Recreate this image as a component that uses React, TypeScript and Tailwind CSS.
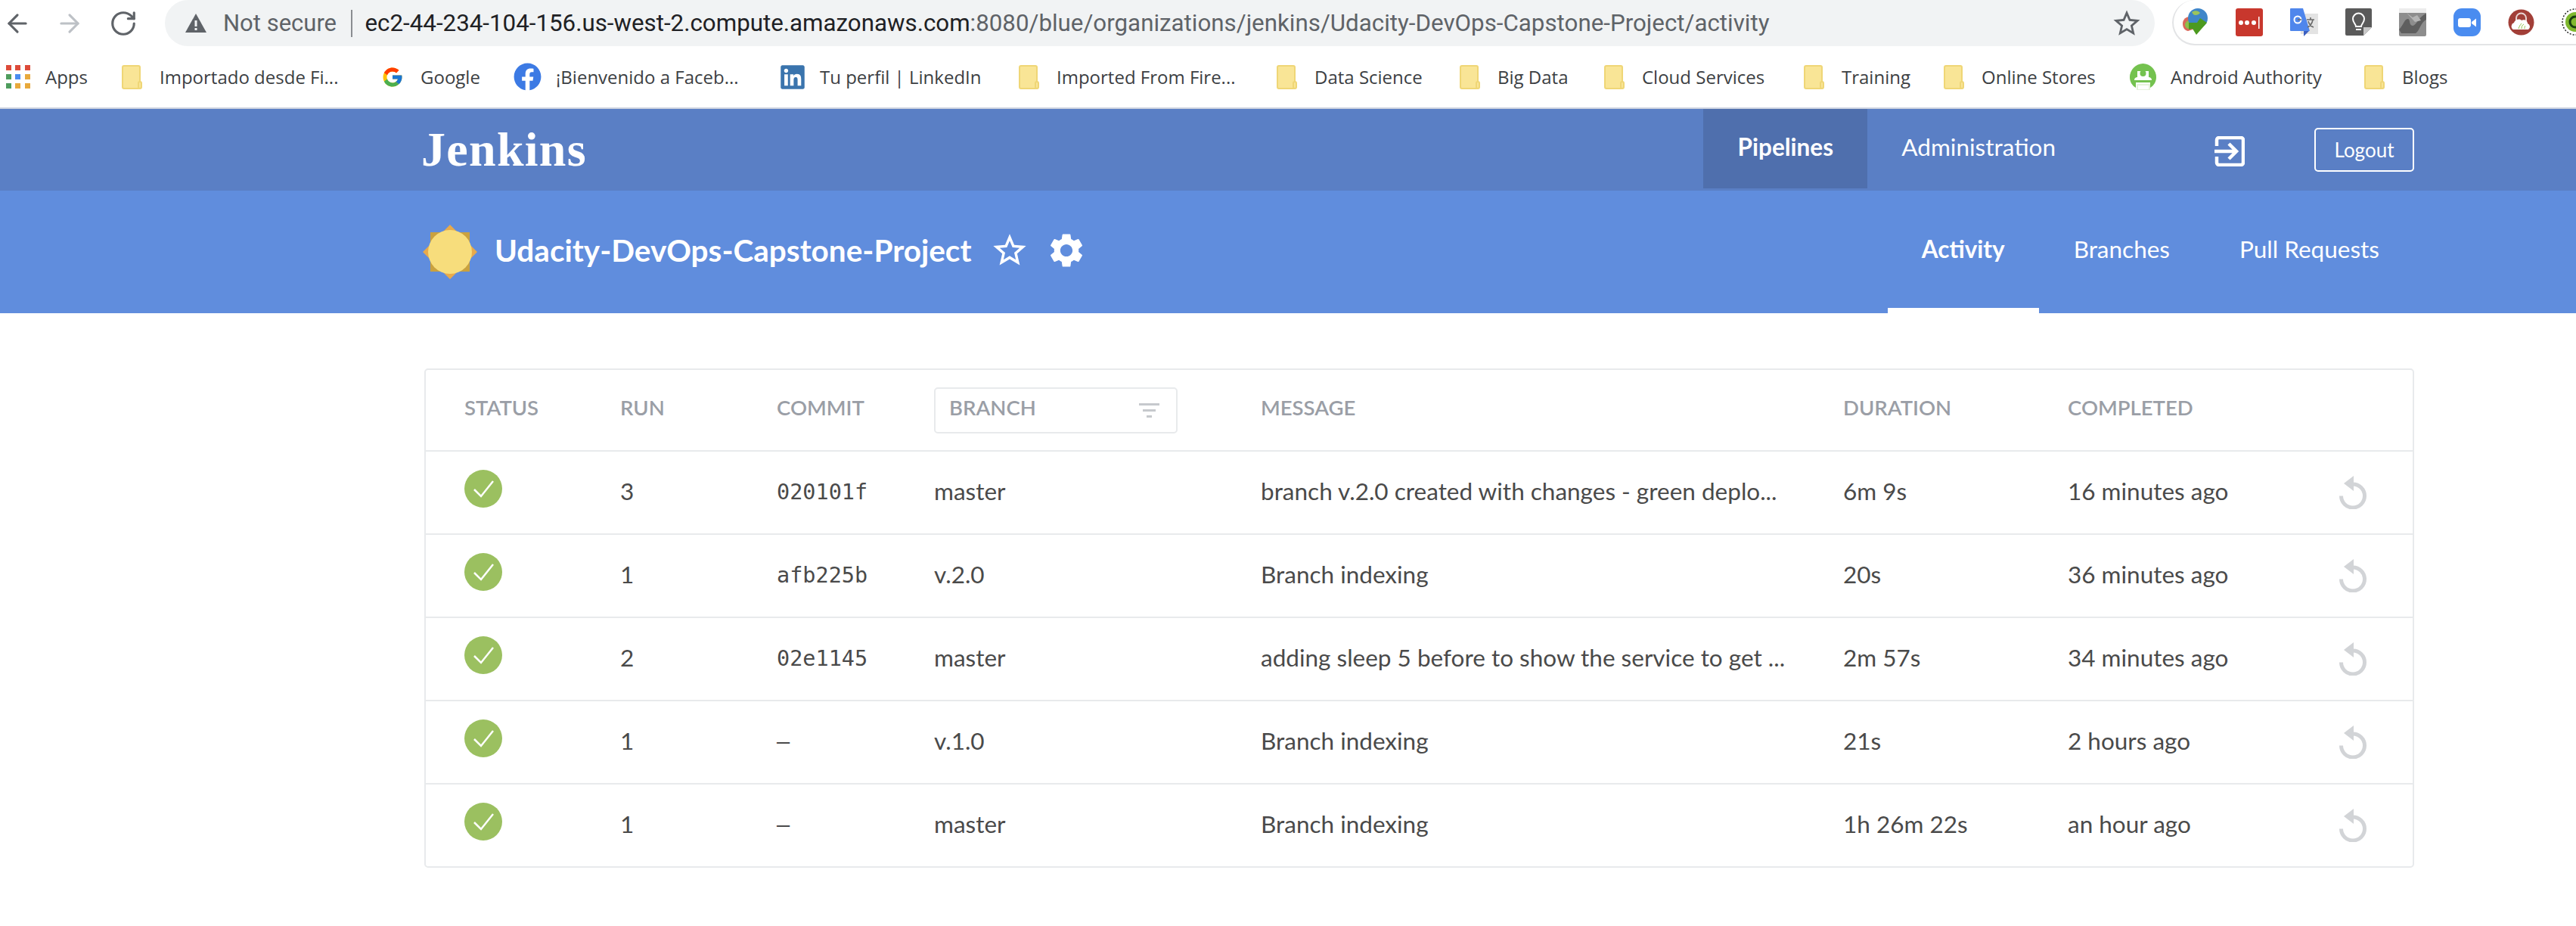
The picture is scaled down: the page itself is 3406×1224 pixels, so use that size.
import React from "react";
import { ArrowLeft, ArrowRight, RotateCw } from "lucide-react";
import { FcGoogle } from "react-icons/fc";
import { FaFacebook, FaLinkedin } from "react-icons/fa";
import { MdSettings, MdStarBorder } from "react-icons/md";

function Folder() {
  return (
    <svg width="27" height="32" viewBox="0 0 27 32" className="shrink-0">
      <rect x="1" y="1" width="23" height="30" rx="2" fill="#f9e596" stroke="#efd676" strokeWidth="2" />
      <rect x="22" y="22" width="4" height="9" rx="2" fill="#f9e596" stroke="#efd676" strokeWidth="2" />
    </svg>
  );
}

function AppsGrid() {
  const c = ["#dd4b39", "#dd4b39", "#dd4b39", "#4f9d5d", "#4a8cf0", "#e8a93c", "#4f9d5d", "#e8a93c", "#e8a93c"];
  return (
    <div className="grid grid-cols-3 gap-[5px] w-[32px] shrink-0">
      {c.map((x, i) => (
        <svg key={i} width="7" height="7" className="block">
          <rect width="7" height="7" fill={x} />
        </svg>
      ))}
    </div>
  );
}

function AndroidIcon() {
  return (
    <svg width="37" height="36" viewBox="0 0 37 36" className="shrink-0">
      <path d="M18.5 0A18 18 0 0 0 1 18c0 6 3 11 8 14V25h19v7c5-3 8-8 8-14A18 18 0 0 0 18.5 0Z" fill="#74c24f" />
      <path d="M7 22c0-3 2-4 4-4V10h15v8c2 0 4 1 4 4Z" fill="#fff" />
      <circle cx="18.5" cy="13" r="4" fill="#74c24f" />
      <path d="M10 27h18v8H10Z" fill="#e6f3dc" />
      <path d="M12 29h14v5H12Z" fill="#fff" />
    </svg>
  );
}

const bookmarks: { icon: React.ReactNode; label: string; cls: string; item: string }[] = [
  { icon: <Folder />, label: "Importado desde Fi...", cls: "w-[252px]", item: "gap-[23px]" },
  { icon: <FcGoogle size={30} className="shrink-0" />, label: "Google", cls: "w-[86px]", item: "gap-[22px]" },
  { icon: <FaFacebook size={37} color="#3c7ae4" className="shrink-0" />, label: "¡Bienvenido a Faceb...", cls: "w-[254px]", item: "gap-[19px] -ml-[4px]" },
  { icon: <FaLinkedin size={36} color="#3a74ad" className="shrink-0" />, label: "Tu perfil | LinkedIn", cls: "w-[222px]", item: "gap-[18px]" },
  { icon: <Folder />, label: "Imported From Fire...", cls: "w-[250px]", item: "gap-[23px]" },
  { icon: <Folder />, label: "Data Science", cls: "w-[151px]", item: "gap-[23px]" },
  { icon: <Folder />, label: "Big Data", cls: "w-[100px]", item: "gap-[23px]" },
  { icon: <Folder />, label: "Cloud Services", cls: "w-[173px]", item: "gap-[23px]" },
  { icon: <Folder />, label: "Training", cls: "w-[94px]", item: "gap-[23px]" },
  { icon: <Folder />, label: "Online Stores", cls: "w-[158px]", item: "gap-[23px]" },
  { icon: <AndroidIcon />, label: "Android Authority", cls: "w-[215px]", item: "gap-[18px] -ml-[4px]" },
  { icon: <Folder />, label: "Blogs", cls: "w-[64px]", item: "gap-[23px]" },
];

function ExtensionIcons() {
  return (
    <div className="flex items-center gap-[36px] pl-[10px]">
      <svg width="36" height="36" viewBox="0 0 36 36" className="shrink-0">
        <path d="M2 20c0-6 6-10 12-9l4 16-9 3C4 29 2 25 2 20Z" fill="#d9695a" />
        <path d="M5 21c1-4 5-6 9-5l2 9-7 2c-3-1-4-3-4-6Z" fill="#8fbf4a" />
        <circle cx="22" cy="13" r="13" fill="#3f86c9" />
        <path d="M14 5c4-3 9-2 11 1-2 3-7 4-9 2Z" fill="#9cc45c" />
        <path d="M10 19h11l4-6 9 6-14 16-5-8-5 1Z" fill="#4c9a1f" />
      </svg>
      <svg width="36" height="37" viewBox="0 0 36 37" className="shrink-0">
        <rect width="36" height="37" rx="3" fill="#c8372d" />
        <circle cx="7" cy="19" r="3" fill="#fff" />
        <circle cx="15" cy="19" r="3" fill="#fff" />
        <circle cx="24" cy="19" r="3" fill="#fff" />
        <rect x="30" y="11" width="1.5" height="16" fill="#fff" />
      </svg>
      <svg width="37" height="37" viewBox="0 0 37 37" className="shrink-0">
        <rect x="14" y="7" width="23" height="27" fill="#e3e3e3" />
        <path d="M0 1a1 1 0 0 1 1-1h16l9 30H1a1 1 0 0 1-1-1Z" fill="#4f86ec" />
        <path d="M18 30h7l-7 7Z" fill="#3b5fc0" />
        <circle cx="10" cy="15" r="4.5" fill="none" stroke="#fff" strokeWidth="2" />
        <path d="M10 15h5M22 15h10M27 12v3M30 15c-1 6-5 9-7 10M24 17c1 4 4 7 7 8" fill="none" stroke="#6b6b6b" strokeWidth="1.6" />
      </svg>
      <svg width="35" height="36" viewBox="0 0 35 36" className="shrink-0">
        <path d="M2 0h31a2 2 0 0 1 2 2v23L24 36H2a2 2 0 0 1-2-2V2a2 2 0 0 1 2-2Z" fill="#5a5a5a" />
        <path d="M24 36V25h11Z" fill="#c8c8c8" />
        <path d="M14 24c0-3-4-5-4-10a7.500 7.500 0 0 1 15 0c0 5-4 7-4 10Z" fill="none" stroke="#fff" strokeWidth="2" />
        <path d="M14 28h7" stroke="#fff" strokeWidth="2" />
      </svg>
      <svg width="36" height="37" viewBox="0 0 36 37" className="shrink-0">
        <rect width="36" height="37" rx="2" fill="#8d8d8d" />
        <rect width="36" height="6" fill="#ececec" />
        <path d="M0 28c6-6 7-14 12-14 3 0 1 9 6 9s8-12 18-16v8c-8 4-8 14-14 18H3Z" fill="#5f5f5f" />
        <path d="M10 6l8 6 6-3 5 7-8 2Z" fill="#b4b4b4" />
      </svg>
      <svg width="36" height="37" viewBox="0 0 36 37" className="shrink-0">
        <rect width="36" height="37" rx="11" fill="#4a8cf0" />
        <rect x="6" y="13" width="17" height="12" rx="3" fill="#fff" />
        <path d="M24 18l6-4.500v11L24 20Z" fill="#fff" />
      </svg>
      <svg width="35" height="35" viewBox="0 0 35 35" className="shrink-0">
        <circle cx="17.500" cy="17.500" r="17" fill="#a23f38" />
        <path d="M11 15v-3a6.500 6.500 0 0 1 13 0v4" fill="none" stroke="#e9d6d4" strokeWidth="2" />
        <path d="M7 27a5 5 0 0 1 1-9c1-4 7-6 10-3 3-2 8 0 8 4a4.500 4.500 0 0 1 1 8Z" fill="#fff" />
        <path d="M14 26c1-3 2-5 4-7M18 26c0-3 1-5 3-6M22 26c0-2 0-3 1-4" stroke="#8fbf4a" strokeWidth="1" fill="none" />
      </svg>
      <svg width="36" height="36" viewBox="0 0 36 36" className="shrink-0">
        <circle cx="18" cy="18" r="17" fill="#fff" stroke="#222" strokeWidth="1.500" strokeDasharray="2 2" />
        <circle cx="18" cy="18" r="13" fill="#7fb82e" />
        <circle cx="18" cy="18" r="7" fill="none" stroke="#173d10" strokeWidth="3" />
      </svg>
    </div>
  );
}

function BrowserChrome() {
  return (
    <div className="bg-white font-['Open_Sans',sans-serif]">
      <div className="flex h-[61px]">
        <div className="w-[218px] shrink-0 flex items-center">
          <ArrowLeft size={38} strokeWidth={2} color="#5f6368" className="ml-[4px]" />
          <ArrowRight size={38} strokeWidth={2} color="#bdc1c6" className="ml-[31px]" />
          <RotateCw size={38} strokeWidth={2} color="#5f6368" className="ml-[33px]" />
        </div>
        <div className="w-[2631px] shrink-0 h-[61px] rounded-full bg-[#f1f3f4] flex items-center pl-[27px] pr-[16px]">
          <svg width="28" height="25" viewBox="0 0 28 25" className="shrink-0">
            <path d="M14 0 28 25H0Z" fill="#5f6368" />
            <rect x="12.500" y="9" width="3" height="8" fill="#f1f3f4" />
            <rect x="12.500" y="19" width="3" height="3" fill="#f1f3f4" />
          </svg>
          <span className="ml-[22px] w-[149px] text-[31px] text-[#5f6368] whitespace-nowrap leading-none font-['Roboto',sans-serif]">Not secure</span>
          <span className="ml-[20px] w-[1.500px] h-[36px] bg-[#8a8d91] shrink-0" />
          <span className="ml-[17px] text-[31.3px] whitespace-nowrap leading-none font-['Roboto',sans-serif] text-[#202124]">
            ec2-44-234-104-156.us-west-2.compute.amazonaws.com<span className="text-[#5f6368]">:8080/blue/organizations/jenkins/Udacity-DevOps-Capstone-Project/activity</span>
          </span>
          <MdStarBorder size={42} color="#5f6368" className="ml-auto shrink-0" />
        </div>
        <div className="ml-[23px] flex-1 h-[60px] rounded-l-[30px] border-2 border-r-0 border-t-0 border-[#e3e4e6] bg-white flex items-center overflow-hidden">
          <ExtensionIcons />
        </div>
      </div>
      <div className="h-[81px] flex items-center pl-[8px] gap-[41px] text-[24px] text-[#3c4043] whitespace-nowrap">
        <div className="flex items-center gap-[20px]">
          <AppsGrid />
          <span className="w-[60px]">Apps</span>
        </div>
        {bookmarks.map((b) => (
          <div key={b.label} className={`flex items-center ${b.item}`}>
            {b.icon}
            <span className={b.cls}>{b.label}</span>
          </div>
        ))}
      </div>
      <div className="h-[2px] bg-[#ccd2e0]" />
    </div>
  );
}

function ExitIcon() {
  return (
    <svg width="40" height="40" viewBox="0 0 40 40">
      <path d="M3 13V5a3 3 0 0 1 3-3h29a3 3 0 0 1 3 3v30a3 3 0 0 1-3 3H6a3 3 0 0 1-3-3v-8" fill="none" stroke="#fff" strokeWidth="4.500" />
      <path d="M0 20h27M19 10l10 10-10 10" fill="none" stroke="#fff" strokeWidth="4.500" />
    </svg>
  );
}

function SunIcon() {
  return (
    <svg width="72" height="72" viewBox="0 0 72 72" className="shrink-0">
      <rect x="10" y="10" width="52" height="52" fill="#c9a13f" />
      <path d="M36 0 50 14H22ZM36 72 50 58H22ZM0 36 14 22V50ZM72 36 58 22V50Z" fill="#e8aa4b" />
      <circle cx="36" cy="36" r="29" fill="#f7dd7c" />
    </svg>
  );
}

function Header() {
  return (
    <div className="font-['Lato',sans-serif] text-white">
      <div className="h-[108px] bg-[#5a7fc5] flex pl-[557px] pr-[214px]">
        <div className="font-['Liberation_Serif',serif] font-bold text-[64px] leading-none tracking-[1.3px] mt-[22px]">Jenkins</div>
        <div className="ml-auto flex items-start">
          <div className="w-[217px] h-[105px] bg-[#4f6fad] flex items-center justify-center text-[31.5px] font-bold pb-[3px]">Pipelines</div>
          <div className="h-[105px] px-[45px] flex items-center text-[31.5px] pb-[3px]">Administration</div>
          <div className="ml-[165px] mt-[36px]"><ExitIcon /></div>
          <div className="ml-[92px] mt-[25px] w-[132px] h-[58px] rounded-[5px] border-2 border-white flex items-center justify-center text-[26px]">Logout</div>
        </div>
      </div>
      <div className="h-[162px] bg-[#608ddd] flex items-center pl-[559px] pr-[214px]">
        <SunIcon />
        <div className="ml-[23px] mb-[4px] text-[40.5px] font-bold leading-none whitespace-nowrap">Udacity-DevOps-Capstone-Project</div>
        <MdStarBorder size={52} color="#fff" className="ml-[25px] mb-[4px] shrink-0" />
        <MdSettings size={54} color="#fff" className="ml-[22px] mb-[4px] shrink-0" />
        <div className="ml-auto flex h-full text-[31.5px]">
          <div className="px-[45px] flex items-center border-b-[7px] border-white font-bold">Activity</div>
          <div className="px-[46px] flex items-center pb-[7px]">Branches</div>
          <div className="px-[46px] flex items-center pb-[7px]">Pull Requests</div>
        </div>
      </div>
    </div>
  );
}

function CheckIcon() {
  return (
    <svg width="50" height="50" viewBox="0 0 50 50" className="mb-[10px]">
      <circle cx="25" cy="25" r="25" fill="#9bc060" />
      <path d="M13 26l9 9 16-20" fill="none" stroke="#fff" strokeWidth="2.500" />
    </svg>
  );
}

function ReplayIcon() {
  return (
    <svg width="36" height="44" viewBox="0 0 36 44" className="block">
      <path d="M18 11A15.500 15.500 0 1 1 2.500 26.500" fill="none" stroke="#d2d4d7" strokeWidth="5" />
      <path d="M19 0V20L6 10Z" fill="#d2d4d7" />
    </svg>
  );
}

const rows = [
  { run: "3", commit: "020101f", branch: "master", msg: "branch v.2.0 created with changes - green deplo...", dur: "6m 9s", done: "16 minutes ago" },
  { run: "1", commit: "afb225b", branch: "v.2.0", msg: "Branch indexing", dur: "20s", done: "36 minutes ago" },
  { run: "2", commit: "02e1145", branch: "master", msg: "adding sleep 5 before to show the service to get ...", dur: "2m 57s", done: "34 minutes ago" },
  { run: "1", commit: "–", branch: "v.1.0", msg: "Branch indexing", dur: "21s", done: "2 hours ago" },
  { run: "1", commit: "–", branch: "master", msg: "Branch indexing", dur: "1h 26m 22s", done: "an hour ago" },
];

const gridCls = "grid grid-cols-[206px_207px_208px_432px_770px_297px_1fr_auto] items-center pl-[51px]";

function RunsTable() {
  return (
    <div className="ml-[561px] mt-[73px] w-[2631px] border-2 border-[#e8eaec] rounded-[5px] font-['Lato',sans-serif]">
      <div className={`${gridCls} h-[108px] border-b-2 border-[#e8eaec] text-[27.5px] font-semibold text-[#9a9ea6]`}>
        <div className="mb-[6px]">STATUS</div>
        <div className="mb-[6px]">RUN</div>
        <div className="mb-[6px]">COMMIT</div>
        <div className="w-[322px] h-[61px] border-2 border-[#e8eaec] rounded-[5px] pl-[18px] pr-[22px] flex items-center justify-between">
          <span className="mb-[6px]">BRANCH</span>
          <svg width="27" height="20" viewBox="0 0 27 20">
            <rect x="0" y="1" width="27" height="3" fill="#c6c9cd" />
            <rect x="5" y="9" width="17" height="3" fill="#c6c9cd" />
            <rect x="10" y="17" width="7" height="3" fill="#c6c9cd" />
          </svg>
        </div>
        <div className="mb-[6px]">MESSAGE</div>
        <div className="mb-[6px]">DURATION</div>
        <div className="mb-[6px]">COMPLETED</div>
      </div>
      {rows.map((r, i) => (
        <div key={i} className={`${gridCls} h-[110px] last:h-[108px] border-b-2 last:border-b-0 border-[#e8eaec] text-[31.5px] text-[#4a4a4a]`}>
          <div className="flex"><CheckIcon /></div>
          <div className="mb-[3px]">{r.run}</div>
          <div className="font-['DejaVu_Sans_Mono',monospace] text-[28.5px]">{r.commit}</div>
          <div className="mb-[3px]">{r.branch}</div>
          <div className="mb-[3px] whitespace-nowrap">{r.msg}</div>
          <div className="mb-[3px]">{r.dur}</div>
          <div className="mb-[3px]">{r.done}</div>
          <div className="pr-[61px]"><ReplayIcon /></div>
        </div>
      ))}
    </div>
  );
}

export default function App() {
  return (
    <div className="w-[3406px] h-[1224px] bg-white overflow-hidden">
      <BrowserChrome />
      <Header />
      <RunsTable />
    </div>
  );
}
